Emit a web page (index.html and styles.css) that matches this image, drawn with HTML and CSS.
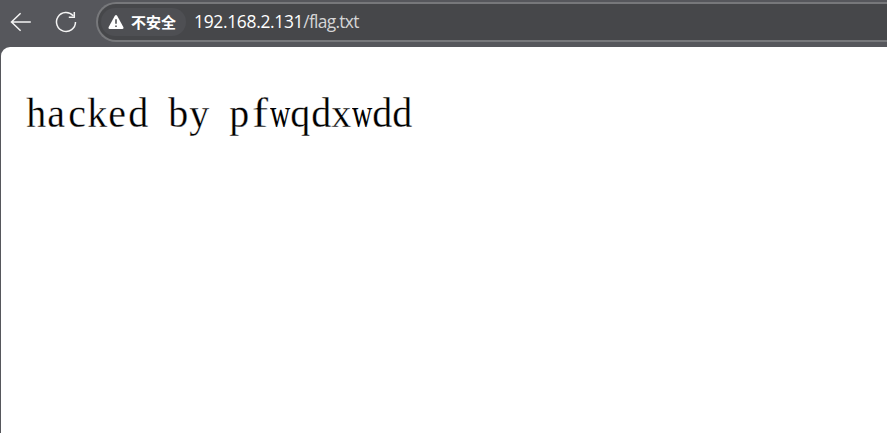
FILE: index.html
```
<!DOCTYPE html>
<html lang="zh-CN">
<head>
<meta charset="utf-8">
<title>flag.txt</title>
<link rel="stylesheet" href="styles.css">
</head>
<body>
<header class="toolbar">
  <svg class="back" width="24" height="24" viewBox="0 0 24 24"><path d="M21.8 12H2.2M11.6 3.3 2.5 12l9.1 8.7"/></svg>
  <svg class="reload" width="24" height="24" viewBox="0 0 24 24"><path d="M21.5 12A9.5 9.5 0 1 1 19.2 5.8M20.3 1.9V7.3H14.8"/></svg>
  <div class="address">
    <div class="security">
      <svg width="16" height="14" viewBox="0 0 16 14"><path fill="#fff" d="M6.7 1Q8-.8 9.3 1l6 10.9Q16 14 14.2 14H1.8Q0 14 .7 11.9Z"/><path stroke="#4e4f53" stroke-width="1.6" d="M8 4.2v4.6M8 10.4v1.6"/></svg>
      <span>不安全</span>
    </div>
    <span class="url">192.168.2.131<span class="path">/flag.txt</span></span>
  </div>
</header>
<main class="page">
  <div class="text"><span>h</span><span>a</span><span>c</span><span>k</span><span>e</span><span>d</span><span> </span><span>b</span><span>y</span><span> </span><span>p</span><span class="narrow">f</span><span class="wide">w</span><span>q</span><span>d</span><span>x</span><span class="wide">w</span><span>d</span><span>d</span></div>
</main>
</body>
</html>
```
FILE: styles.css
```
* { box-sizing: border-box; }
body {
  margin: 0;
  height: 433px;
  overflow: hidden;
  background: #56575c;
  display: flex;
  flex-direction: column;
}
.toolbar {
  height: 47px;
  flex: none;
  display: flex;
  align-items: flex-start;
  padding: 2px 0 0 9px;
}
.toolbar > svg {
  flex: none;
  fill: none;
  stroke: #f4f4f4;
  stroke-width: 1.5;
  margin-top: 8px;
}
.back { margin-right: 21px; }
.reload { margin-right: 18px; }
.address {
  flex: 1;
  height: 40px;
  border: 2px solid #77787b;
  border-right: 0;
  border-radius: 20px 0 0 20px;
  background: #46474a;
  display: flex;
  align-items: center;
  padding-left: 3px;
}
.security {
  width: 85px;
  height: 28px;
  border-radius: 14px;
  background: #4e4f53;
  display: flex;
  align-items: center;
  gap: 7px;
  padding-left: 7px;
  color: #fff;
  font: bold 15px/28px "Noto Sans CJK SC", sans-serif;
  white-space: nowrap;
}
.security svg { flex: none; }
.url {
  margin: -2px 0 0 8px;
  color: #fff;
  font: 17.4px/28px "Open Sans", sans-serif;
  letter-spacing: -0.3px;
  white-space: nowrap;
}
.path {
  color: #d5d5d6;
  letter-spacing: -0.7px;
}
.page {
  flex: 1;
  margin-left: 1px;
  background: #fff;
  border-radius: 9px 0 0 0;
  padding: 42px 0 0 25px;
}
.text {
  display: flex;
  color: #000;
  font: 42px/48px "Liberation Serif", serif;
  -webkit-text-stroke: 0.3px #fff;
}
.text span {
  width: 20.35px;
  display: flex;
  justify-content: center;
  white-space: pre;
  transform: scaleX(0.95);
}
.text .narrow { transform: scaleX(1.15); }
.text .wide {
  transform: scaleX(0.67);
  -webkit-text-stroke-width: 0;
}
```
